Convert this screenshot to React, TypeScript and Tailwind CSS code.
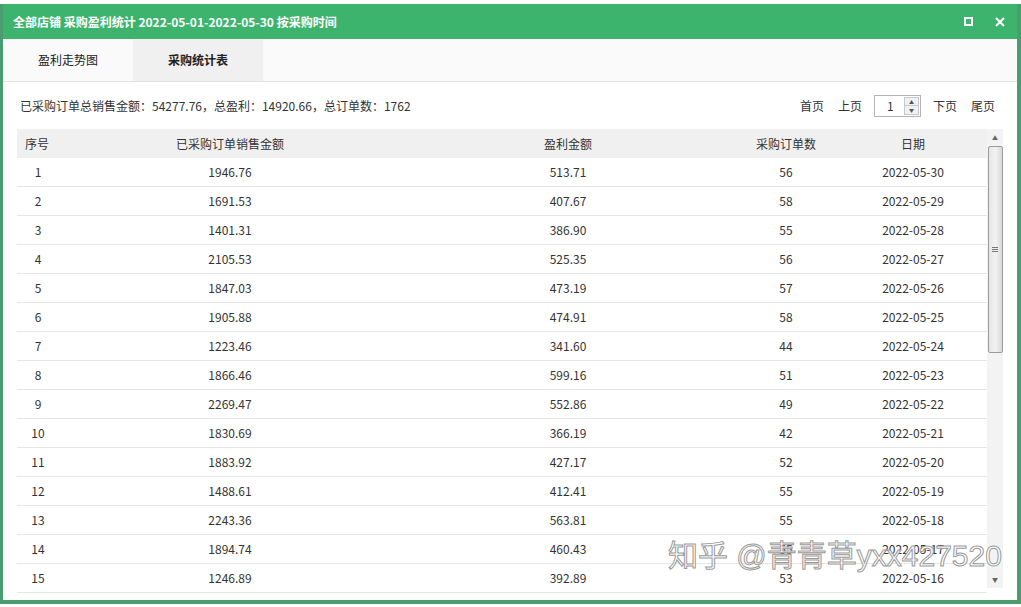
import React from 'react'

const rows = [
  ['1', '1946.76', '513.71', '56', '2022-05-30'],
  ['2', '1691.53', '407.67', '58', '2022-05-29'],
  ['3', '1401.31', '386.90', '55', '2022-05-28'],
  ['4', '2105.53', '525.35', '56', '2022-05-27'],
  ['5', '1847.03', '473.19', '57', '2022-05-26'],
  ['6', '1905.88', '474.91', '58', '2022-05-25'],
  ['7', '1223.46', '341.60', '44', '2022-05-24'],
  ['8', '1866.46', '599.16', '51', '2022-05-23'],
  ['9', '2269.47', '552.86', '49', '2022-05-22'],
  ['10', '1830.69', '366.19', '42', '2022-05-21'],
  ['11', '1883.92', '427.17', '52', '2022-05-20'],
  ['12', '1488.61', '412.41', '55', '2022-05-19'],
  ['13', '2243.36', '563.81', '55', '2022-05-18'],
  ['14', '1894.74', '460.43', '55', '2022-05-17'],
  ['15', '1246.89', '392.89', '53', '2022-05-16'],
]

const font = "font-['Noto_Sans_CJK_SC','Noto_Sans',sans-serif]"
const cols = 'grid grid-cols-[73px_280px_366px_100px_154px]'

function Row({ cells, header }: { cells: string[]; header?: boolean }) {
  return (
    <div
      className={`${cols} h-[29px] items-center text-[12px] text-[#333] ${
        header ? 'bg-[#f0f0f0]' : 'border-b border-[#e6e6e6]'
      }`}
    >
      {header ? (
        <div className="pl-[8px]">{cells[0]}</div>
      ) : (
        <div className="w-[42px] text-center">{cells[0]}</div>
      )}
      <div className="text-center">{cells[1]}</div>
      <div className="pl-[30px] text-center">{cells[2]}</div>
      <div className="text-center">{cells[3]}</div>
      <div className="text-center">{cells[4]}</div>
    </div>
  )
}

function Scrollbar() {
  return (
    <div className="flex h-[459px] w-[16px] flex-col items-center bg-[#f3f3f3]">
      <div className="flex h-[17px] w-full items-center justify-center text-[6px] text-[#666]">▲</div>
      <div className="flex h-[207px] w-[15px] items-center justify-center rounded-[2px] border border-[#9a9a9a] bg-gradient-to-r from-[#e6e6e6] via-[#f2f2f2] to-[#d9d9d9]">
        <div className="flex flex-col gap-[1px]">
          <div className="h-px w-[6px] bg-[#777]" />
          <div className="h-px w-[6px] bg-[#777]" />
          <div className="h-px w-[6px] bg-[#777]" />
        </div>
      </div>
      <div className="flex-1" />
      <div className="flex h-[17px] w-full items-center justify-center text-[6px] text-[#666]">▼</div>
    </div>
  )
}

export default function App() {
  return (
    <div className={`relative h-[607px] w-[1021px] overflow-hidden bg-white pt-[4px] ${font}`}>
      <div className="flex h-[600px] flex-col border-b-[4px] border-l-[3px] border-r-[4px] border-[#4b9d70] bg-white">
        <div className="flex h-[35px] items-center justify-between bg-[#3db46d] pl-[10px] pr-[12px] text-white">
          <span className="text-[12px] font-bold">全部店铺 采购盈利统计 2022-05-01-2022-05-30 按采购时间</span>
          <div className="flex items-center gap-[22px]">
            <div className="h-[9px] w-[9px] border-[2px] border-white" />
            <svg width="10" height="10" viewBox="0 0 10 10">
              <path d="M1 1L9 9M9 1L1 9" stroke="white" strokeWidth="2" />
            </svg>
          </div>
        </div>

        <div className="flex h-[43px] border-b border-[#e3e3e3] bg-[#fafafa] text-[12px] text-[#222]">
          <div className="flex w-[130px] items-center justify-center">盈利走势图</div>
          <div className="flex w-[130px] items-center justify-center bg-[#f0f0f0] font-bold">采购统计表</div>
        </div>

        <div className="px-[14px]">
          <div className="flex h-[47px] items-center justify-between pl-[3px] pr-[8px] text-[12px] text-[#333]">
            <span>已采购订单总销售金额：54277.76，总盈利：14920.66，总订单数：1762</span>
            <div className="flex items-center">
              <span>首页</span>
              <span className="ml-[14px]">上页</span>
              <div className="ml-[12px] flex h-[22px] w-[47px] items-center justify-between border border-[#b5b5b5] bg-white pl-[12px] pr-[1px]">
                <span>1</span>
                <div className="flex h-[18px] w-[15px] flex-col border border-[#c8c8c8] bg-[#eef2f6]">
                  <div className="flex flex-1 items-center justify-center border-b border-[#c8c8c8] text-[5px] text-[#555]">▲</div>
                  <div className="flex flex-1 items-center justify-center text-[5px] text-[#555]">▼</div>
                </div>
              </div>
              <span className="ml-[12px]">下页</span>
              <span className="ml-[14px]">尾页</span>
            </div>
          </div>

          <div className="flex">
            <div className="h-[464px] w-[973px] overflow-hidden">
              <Row header cells={['序号', '已采购订单销售金额', '盈利金额', '采购订单数', '日期']} />
              {rows.map((r) => (
                <Row key={r[0]} cells={r} />
              ))}
            </div>
            <Scrollbar />
          </div>
        </div>
      </div>

      <div className="pointer-events-none absolute left-[668px] top-[541px] font-['Liberation_Sans','Noto_Sans_CJK_SC',sans-serif] text-[30px] leading-none text-white/90 [-webkit-text-stroke:1px_#9a9a9a]">
        知乎 @青青草yxx427520
      </div>
    </div>
  )
}
